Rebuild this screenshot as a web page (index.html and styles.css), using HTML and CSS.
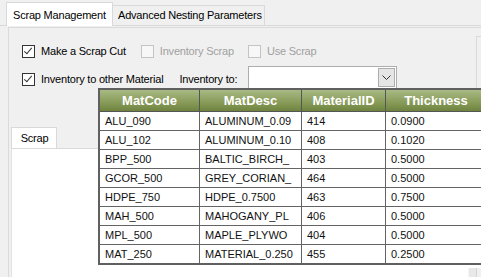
FILE: index.html
```html
<!DOCTYPE html>
<html>
<head>
  <title>Scrap Management</title>
  <link rel="stylesheet" href="styles.css">
</head>
<body>
  <div class="tabs">
    <div class="tab active">Scrap Management</div>
    <div class="tab">Advanced Nesting Parameters</div>
  </div>
  <div class="page">
    <div class="top">
      <div class="options">
        <div class="row first">
          <label class="check"><span class="box on"></span>Make a Scrap Cut</label>
          <label class="check off"><span class="box"></span>Inventory Scrap</label>
          <label class="check off"><span class="box"></span>Use Scrap</label>
        </div>
        <div class="row second">
          <label class="check"><span class="box on"></span>Inventory to other Material</label>
          <span class="caption">Inventory to:</span>
          <div class="combo">
            <span class="drop">
              <svg width="9" height="5" viewBox="0 0 9 5"><polyline points="0.5,0.5 4.5,4.5 8.5,0.5" fill="none" stroke="#333" stroke-width="1"/></svg>
            </span>
          </div>
        </div>
      </div>
      <div class="side"></div>
    </div>
    <div class="subtabs">
      <div class="subtab">Scrap</div>
    </div>
    <div class="subpage">
      <div class="scroll"><span></span></div>
    </div>
  </div>

  <table class="grid">
    <thead>
      <tr>
        <th class="c1">MatCode</th>
        <th class="c2">MatDesc</th>
        <th class="c3">MaterialID</th>
        <th class="c4">Thickness</th>
      </tr>
    </thead>
    <tbody>
      <tr><td>ALU_090</td><td>ALUMINUM_0.09</td><td>414</td><td>0.0900</td></tr>
      <tr><td>ALU_102</td><td>ALUMINUM_0.10</td><td>408</td><td>0.1020</td></tr>
      <tr><td>BPP_500</td><td>BALTIC_BIRCH_</td><td>403</td><td>0.5000</td></tr>
      <tr><td>GCOR_500</td><td>GREY_CORIAN_</td><td>464</td><td>0.5000</td></tr>
      <tr><td>HDPE_750</td><td>HDPE_0.7500</td><td>463</td><td>0.7500</td></tr>
      <tr><td>MAH_500</td><td>MAHOGANY_PL</td><td>406</td><td>0.5000</td></tr>
      <tr><td>MPL_500</td><td>MAPLE_PLYWO</td><td>404</td><td>0.5000</td></tr>
      <tr><td>MAT_250</td><td>MATERIAL_0.250</td><td>455</td><td>0.2500</td></tr>
    </tbody>
  </table>
</body>
</html>
```

FILE: styles.css
```css
/* window chrome */
html, body {
  margin: 0;
  height: 100%;
}

body {
  width: 481px;
  height: 277px;
  overflow: hidden;
  position: relative;
  background-color: #f0f0f0;
  font-family: "Liberation Sans", Arial, sans-serif;
  font-size: 11px;
  letter-spacing: -0.2px;
  color: #000;
  display: flex;
  flex-direction: column;
}

/* main tab strip */
.tabs {
  display: flex;
  align-items: flex-end;
  height: 25px;
  padding-left: 6px;
  border-bottom: 1px solid #d9d9d9;
}

.tab {
  box-sizing: border-box;
  width: 152px;
  height: 20px;
  line-height: 19px;
  padding-left: 5px;
  border: 1px solid #d9d9d9;
  border-left: none;
  border-bottom: none;
  background-color: #f0f0f0;
  white-space: nowrap;
}

.tab.active {
  width: 107px;
  height: 24px;
  line-height: 25px;
  padding-left: 6px;
  border-left: 1px solid #d9d9d9;
  background-color: #fff;
  margin-bottom: -1px;
  position: relative;
  z-index: 1;
}

/* tab page */
.page {
  flex: 1;
  display: flex;
  flex-direction: column;
  margin-top: 1px;
  margin-left: 8px;
  border-left: 1px solid #dadada;
  border-top: 1px solid #dadada;
}

.top {
  display: flex;
  align-items: flex-start;
}

.options {
  flex: 1;
  padding-left: 13px;
}

.side {
  width: 4px;
  margin-top: 8px;
  height: 53px;
  border-left: 1px solid #dadada;
  border-top: 1px solid #dadada;
}

.row {
  display: flex;
  align-items: flex-start;
}

.row.first {
  margin-top: 17px;
  height: 13px;
}

.row.second {
  margin-top: 8px;
  height: 23px;
}

.check {
  display: flex;
  align-items: center;
  height: 13px;
  line-height: 13px;
  margin-right: 15px;
  white-space: nowrap;
}

.row.second .check {
  margin-top: 7px;
  margin-right: 16px;
}

.check.off {
  color: #a0a0a0;
  margin-right: 14px;
}

.box {
  width: 11px;
  height: 11px;
  border: 1px solid #333;
  background-color: #fff;
  margin-right: 6px;
  position: relative;
}

.check.off .box {
  border-color: #c4c4c4;
  background-color: #f7f7f7;
}

.box.on::after {
  content: "";
  position: absolute;
  left: 3px;
  top: 0px;
  width: 3px;
  height: 7px;
  border-right: 1px solid #333;
  border-bottom: 1px solid #333;
  transform: rotate(40deg);
}

.caption {
  margin-top: 7px;
  line-height: 13px;
  margin-right: 11px;
  white-space: nowrap;
}

.combo {
  width: 146px;
  height: 21px;
  border: 1px solid #adadad;
  background-color: #fff;
  display: flex;
  justify-content: flex-end;
  align-items: center;
  padding-right: 1px;
}

.drop {
  width: 15px;
  height: 17px;
  border: 1px solid #adadad;
  background-color: #e5e5e5;
  display: flex;
  align-items: center;
  justify-content: center;
}

/* lower tab control */
.subtabs {
  display: flex;
  margin-top: 37px;
  padding-left: 2px;
}

.subtab {
  width: 43px;
  height: 20px;
  line-height: 21px;
  padding-left: 1px;
  text-align: center;
  border: 1px solid #d9d9d9;
  border-bottom: none;
  background-color: #fff;
}

.subpage {
  flex: 1;
  margin-left: 2px;
  background-color: #fff;
  border-left: 1px solid #e3e3e3;
  border-top: 1px solid #d9d9d9;
  display: flex;
  justify-content: flex-end;
  align-items: flex-end;
}

.scroll {
  width: 12px;
  height: 9px;
  background-color: #e8e8e8;
  border-left: 1px solid #f4f4f4;
  display: flex;
  justify-content: flex-end;
}

.scroll span {
  width: 4px;
  border-left: 1px solid #d4d4d4;
  background-color: #f0f0f0;
}

/* dropdown grid */
.grid {
  position: absolute;
  left: 98px;
  top: 88px;
  border-collapse: collapse;
  table-layout: fixed;
  width: 390px;
  border: 2px solid #606060;
  background-color: #fff;
  letter-spacing: 0;
}

.grid th {
  height: 21px;
  padding: 0;
  font-size: 13px;
  font-weight: bold;
  color: #fff;
  text-align: center;
  background: linear-gradient(#a9b984, #8a9d5c 55%, #6f833f);
  border: 1px solid #555;
}

.grid .c1 { width: 99px; }
.grid .c2 { width: 101px; }
.grid .c3 { width: 83px; }
.grid .c4 { width: 100px; }

.grid td {
  height: 18px;
  padding: 0 0 0 5px;
  border: 1px solid #646464;
  white-space: nowrap;
  overflow: hidden;
  color: #111;
}
```
